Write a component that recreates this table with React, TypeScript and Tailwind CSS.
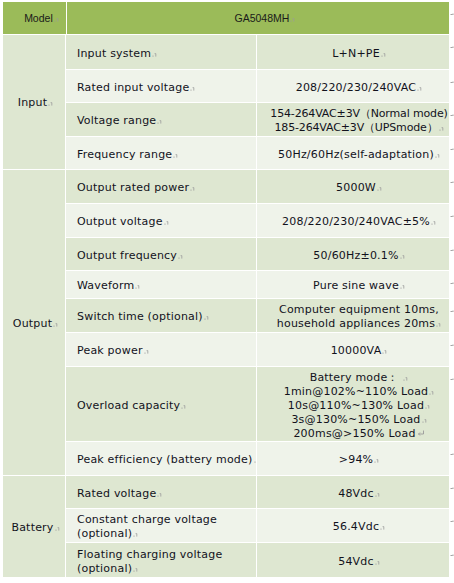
import React from 'react'

type Row = { name: string[]; value: string[]; h: string; tight?: boolean }
type Group = { label: string; rows: Row[] }

const GROUPS: Group[] = [
  {
    label: 'Input',
    rows: [
      { name: ['Input system¶'], value: ['L+N+PE¶'], h: 'h-[34px]' },
      { name: ['Rated input voltage¶'], value: ['208/220/230/240VAC¶'], h: 'h-[32px]' },
      {
        name: ['Voltage range¶'],
        value: ['154-264VAC±3V（Normal mode)', '185-264VAC±3V（UPSmode）¶'],
        h: 'h-[33px]',
        tight: true,
      },
      { name: ['Frequency range¶'], value: ['50Hz/60Hz(self-adaptation)¶'], h: 'h-[32px]' },
    ],
  },
  {
    label: 'Output',
    rows: [
      { name: ['Output rated power¶'], value: ['5000W¶'], h: 'h-[33px]' },
      { name: ['Output voltage¶'], value: ['208/220/230/240VAC±5%¶'], h: 'h-[33px]' },
      { name: ['Output frequency¶'], value: ['50/60Hz±0.1%¶'], h: 'h-[32px]' },
      { name: ['Waveform¶'], value: ['Pure sine wave¶'], h: 'h-[27px]' },
      {
        name: ['Switch time (optional)¶'],
        value: ['Computer equipment 10ms,', 'household appliances 20ms¶'],
        h: 'h-[33px]',
      },
      { name: ['Peak power¶'], value: ['10000VA¶'], h: 'h-[33px]' },
      {
        name: ['Overload capacity¶'],
        value: [
          'Battery mode： ¶',
          '1min@102%~110% Load¶',
          '10s@110%~130% Load¶',
          '3s@130%~150% Load¶',
          '200ms@>150% Load↵',
        ],
        h: 'h-[74px]',
      },
      { name: ['Peak efficiency (battery mode)¶'], value: ['>94%¶'], h: 'h-[33px]' },
    ],
  },
  {
    label: 'Battery',
    rows: [
      { name: ['Rated voltage¶'], value: ['48Vdc¶'], h: 'h-[32px]' },
      { name: ['Constant charge voltage', '(optional)¶'], value: ['56.4Vdc¶'], h: 'h-[33px]' },
      { name: ['Floating charging voltage', '(optional)¶'], value: ['54Vdc¶'], h: 'h-[34px]' },
    ],
  },
]

// tiny word-processor paragraph mark
function Mark() {
  return (
    <svg width="5" height="5" viewBox="0 0 5 5" className="inline-block ml-[1px] align-baseline">
      <rect x="0.5" y="3.6" width="1" height="1" fill="#9a9a9a" />
      <path d="M2.6 1.6 H3.8 V4.6" stroke="#9a9a9a" strokeWidth="0.8" fill="none" />
    </svg>
  )
}

function ReturnMark() {
  return (
    <svg width="8" height="7" viewBox="0 0 8 7" className="inline-block ml-[1px] align-baseline">
      <path d="M6.5 0.5 V4 H1.5 M3 2.5 L1.5 4 L3 5.5" stroke="#9a9a9a" strokeWidth="0.9" fill="none" />
    </svg>
  )
}

function RowEnd() {
  return (
    <div className="w-[4px] pt-[11px]">
      <svg width="4" height="3" viewBox="0 0 4 3" className="block">
        <path d="M0.5 1.5 H2.5 M3 0.5 V2" stroke="#8a8a8a" strokeWidth="0.8" fill="none" />
      </svg>
    </div>
  )
}

function Line({ text }: { text: string }) {
  if (text.endsWith('¶')) {
    return (
      <div>
        {text.slice(0, -1)}
        <Mark />
      </div>
    )
  }
  if (text.endsWith('↵')) {
    return (
      <div>
        {text.slice(0, -1)}
        <ReturnMark />
      </div>
    )
  }
  return <div>{text}</div>
}

export default function App() {
  return (
    <div
      className="w-[454px] h-[583px] bg-white pt-[2px] pl-[3px] text-[11px] tracking-[0.2px] text-[#12121c] overflow-hidden"
      style={{ fontFamily: '"DejaVu Sans", Verdana, sans-serif' }}
    >
      {/* header */}
      <div
        className="flex gap-px h-[32px] text-[10.5px] tracking-normal text-[#1a1a1a]"
        style={{ fontFamily: '"Liberation Sans", Arial, sans-serif' }}
      >
        <div className="w-[63px] bg-[#9bbb59] flex items-center justify-center pl-[14px] pt-[2px]">
          <Line text="Model¶" />
        </div>
        <div className="w-[383px] bg-[#9bbb59] flex items-center justify-center pl-[14px] pt-[2px]">
          <Line text="GA5048MH¶" />
        </div>
        <RowEnd />
      </div>

      <div className="flex flex-col gap-px mt-px">
        {GROUPS.map((g) => (
          <div key={g.label} className="flex gap-px">
            <div className="w-[63px] bg-[#dee7d1] flex items-center justify-center pl-[3px] pt-[3px]">
              <Line text={g.label + '¶'} />
            </div>
            <div className="flex flex-col gap-px">
              {g.rows.map((r, i) => {
                const bg = i % 2 === 0 ? 'bg-[#dee7d1]' : 'bg-[#eff3ea]'
                const track = r.tight ? 'tracking-[-0.15px]' : ''
                return (
                  <div key={r.name[0]} className={`flex gap-px ${r.h}`}>
                    <div
                      className={`w-[190px] ${bg} flex flex-col justify-center pl-[11px] pt-[3px] leading-[14px] whitespace-nowrap overflow-hidden`}
                    >
                      {r.name.map((t) => (
                        <Line key={t} text={t} />
                      ))}
                    </div>
                    <div
                      className={`w-[192px] ${bg} ${track} flex flex-col justify-center pl-[12px] pt-[3px] text-center leading-[14px] whitespace-nowrap overflow-hidden`}
                    >
                      {r.value.map((t) => (
                        <Line key={t} text={t} />
                      ))}
                    </div>
                    <RowEnd />
                  </div>
                )
              })}
            </div>
          </div>
        ))}
      </div>
    </div>
  )
}
